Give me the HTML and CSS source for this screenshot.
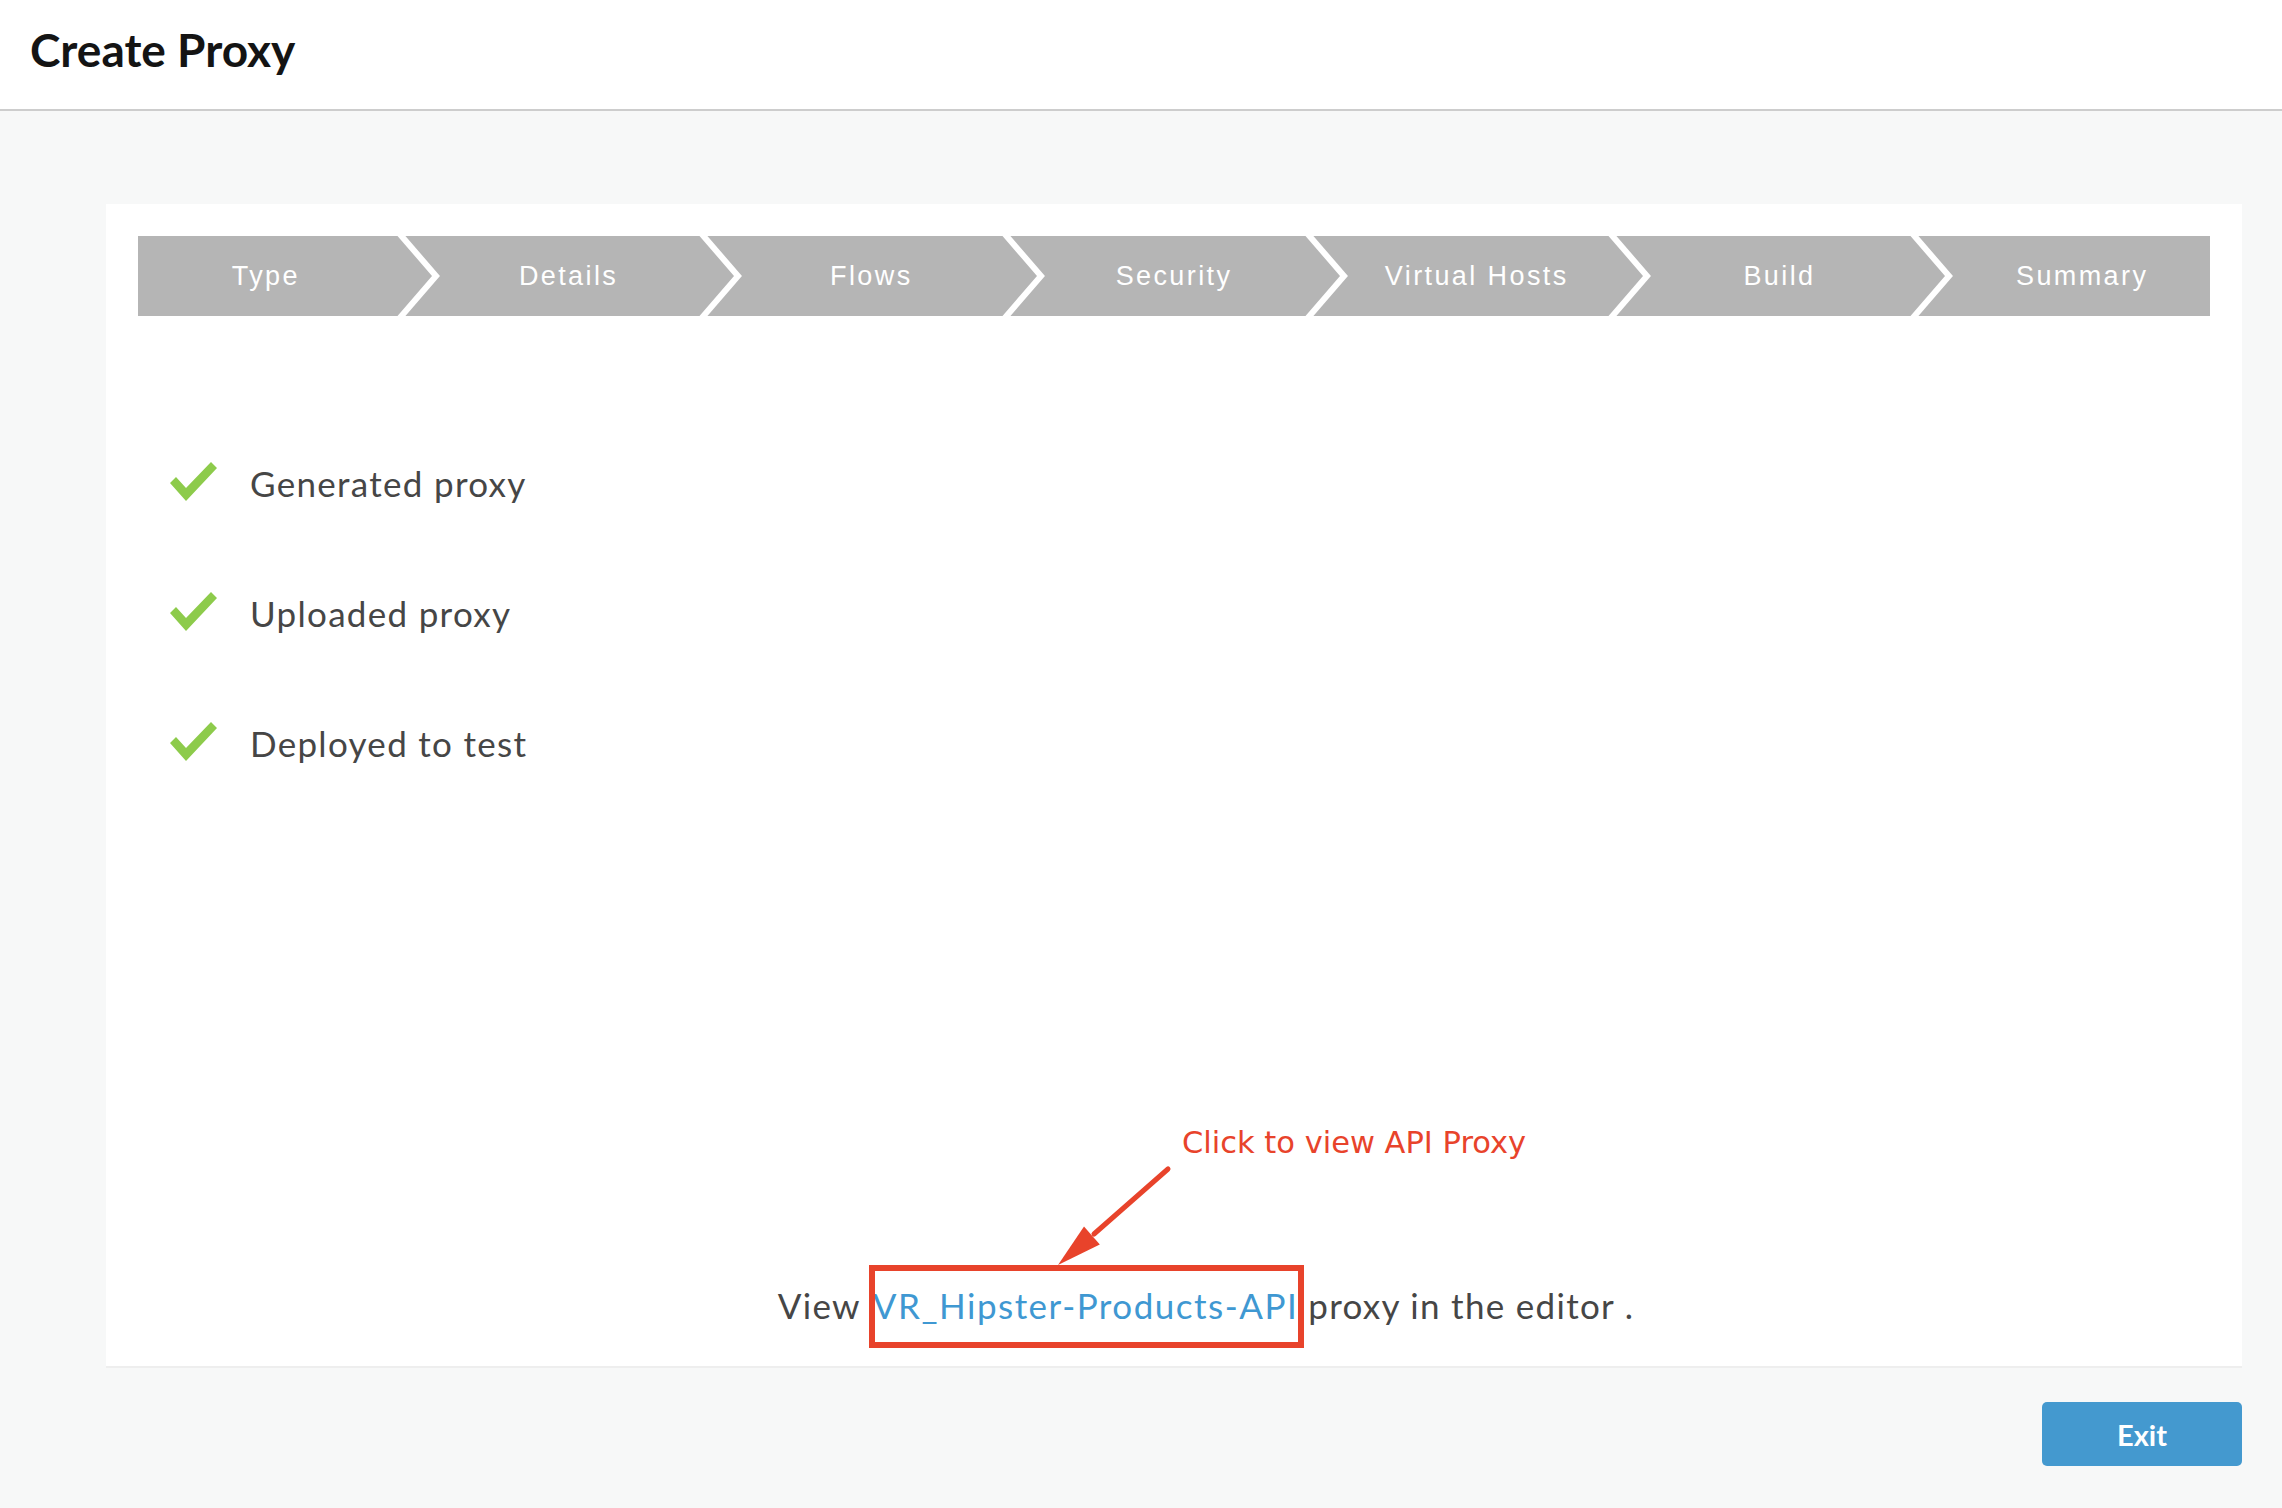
FILE: index.html
```html
<!DOCTYPE html>
<html>
<head>
<meta charset="utf-8">
<title>Create Proxy</title>
<link rel="stylesheet" href="styles.css">
</head>
<body>
<header class="header">
  <h1 class="title">Create Proxy</h1>
</header>
<main class="main">
  <section class="card">
    <div class="steps">
      <div class="step">Type</div>
      <div class="sep"><svg viewBox="0 0 47 80" width="47" height="80"><polyline points="4,-4 42,40 4,84" fill="none" stroke="#fff" stroke-width="6" stroke-linejoin="miter"/></svg></div>
      <div class="step">Details</div>
      <div class="sep"><svg viewBox="0 0 47 80" width="47" height="80"><polyline points="4,-4 42,40 4,84" fill="none" stroke="#fff" stroke-width="6" stroke-linejoin="miter"/></svg></div>
      <div class="step">Flows</div>
      <div class="sep"><svg viewBox="0 0 47 80" width="47" height="80"><polyline points="4,-4 42,40 4,84" fill="none" stroke="#fff" stroke-width="6" stroke-linejoin="miter"/></svg></div>
      <div class="step">Security</div>
      <div class="sep"><svg viewBox="0 0 47 80" width="47" height="80"><polyline points="4,-4 42,40 4,84" fill="none" stroke="#fff" stroke-width="6" stroke-linejoin="miter"/></svg></div>
      <div class="step">Virtual Hosts</div>
      <div class="sep"><svg viewBox="0 0 47 80" width="47" height="80"><polyline points="4,-4 42,40 4,84" fill="none" stroke="#fff" stroke-width="6" stroke-linejoin="miter"/></svg></div>
      <div class="step">Build</div>
      <div class="sep"><svg viewBox="0 0 47 80" width="47" height="80"><polyline points="4,-4 42,40 4,84" fill="none" stroke="#fff" stroke-width="6" stroke-linejoin="miter"/></svg></div>
      <div class="step">Summary</div>
    </div>

    <ul class="checklist">
      <li class="check-row">
        <svg class="check" viewBox="0 0 47 40" width="47" height="40"><polygon points="0,21 6,15 16,26 41,0 47,6 16,39" fill="#8dcb4b"/></svg>
        <span>Generated proxy</span>
      </li>
      <li class="check-row">
        <svg class="check" viewBox="0 0 47 40" width="47" height="40"><polygon points="0,21 6,15 16,26 41,0 47,6 16,39" fill="#8dcb4b"/></svg>
        <span>Uploaded proxy</span>
      </li>
      <li class="check-row">
        <svg class="check" viewBox="0 0 47 40" width="47" height="40"><polygon points="0,21 6,15 16,26 41,0 47,6 16,39" fill="#8dcb4b"/></svg>
        <span>Deployed to test</span>
      </li>
    </ul>

    <p class="footer-line">View<a class="proxy-link" href="#">VR_Hipster-Products-API</a>proxy in the editor .</p>

    <div class="note">Click to view API Proxy</div>
    <svg class="note-arrow" viewBox="0 0 130 120" width="130" height="120">
      <line x1="122" y1="15" x2="48" y2="80" stroke="#e8432b" stroke-width="5" stroke-linecap="round"/>
      <polygon points="12,111 53.8,90.4 38,72.4" fill="#e8432b"/>
    </svg>
  </section>
  <div class="actions">
    <button class="btn-exit" type="button">Exit</button>
  </div>
</main>
</body>
</html>
```
FILE: styles.css
```css
html, body {
  margin: 0;
  padding: 0;
}
body {
  background: #f7f8f8;
  font-family: Lato, "Liberation Sans", sans-serif;
  width: 2282px;
  height: 1508px;
  overflow: hidden;
}
.header {
  box-sizing: border-box;
  height: 111px;
  background: #ffffff;
  border-bottom: 2px solid #cdcdcd;
  padding: 23px 0 0 30px;
}
.title {
  margin: 0;
  font-family: Lato, sans-serif;
  font-weight: 700;
  font-size: 46px;
  line-height: 54px;
  color: #141414;
}
.main {
  padding: 93px 40px 0 106px;
}
.card {
  position: relative;
  box-sizing: border-box;
  height: 1164px;
  background: #ffffff;
  border-bottom: 2px solid #eeeeee;
  padding: 32px 32px 0 32px;
  display: flex;
  flex-direction: column;
}
.steps {
  display: flex;
  height: 80px;
  background: #b5b5b5;
}
.step {
  flex: 1;
  display: flex;
  align-items: center;
  justify-content: center;
  color: #ffffff;
  font-family: "Liberation Sans", Arial, sans-serif;
  font-size: 27px;
  letter-spacing: 2.4px;
}
.sep {
  width: 47px;
  height: 80px;
  flex: none;
  overflow: hidden;
}
.sep svg {
  display: block;
}
.checklist {
  list-style: none;
  margin: 102px 0 0 0;
  padding: 0 0 0 32px;
}
.check-row {
  height: 130px;
  display: flex;
  align-items: center;
  gap: 33px;
  font-size: 35px;
  letter-spacing: 1.3px;
  color: #464646;
}
.check {
  flex: none;
  display: block;
  margin-top: -3px;
}
.footer-line {
  margin: auto 0 40px 0;
  padding-left: 64px;
  text-align: center;
  font-size: 35px;
  line-height: 42px;
  letter-spacing: 1.3px;
  color: #464646;
}
.proxy-link {
  position: relative;
  color: #3f98d2;
  text-decoration: none;
  margin: 0 10px 0 12px;
  letter-spacing: 1.5px;
}
.proxy-link::after {
  content: "";
  position: absolute;
  left: -4px;
  right: -6px;
  top: -19px;
  bottom: -22px;
  border: 6px solid #e8432b;
}
.note {
  position: absolute;
  left: 1076px;
  top: 922px;
  font-family: "DejaVu Sans", Verdana, sans-serif;
  font-size: 30.5px;
  line-height: 34px;
  color: #e8432b;
  white-space: nowrap;
}
.note-arrow {
  position: absolute;
  left: 940px;
  top: 950px;
  overflow: visible;
}
.actions {
  display: flex;
  justify-content: flex-end;
  margin-top: 34px;
}
.btn-exit {
  width: 200px;
  height: 64px;
  border: none;
  border-radius: 5px;
  background: #4499cf;
  color: #ffffff;
  font-family: Lato, sans-serif;
  font-weight: 700;
  font-size: 29px;
  padding: 0;
}
```
